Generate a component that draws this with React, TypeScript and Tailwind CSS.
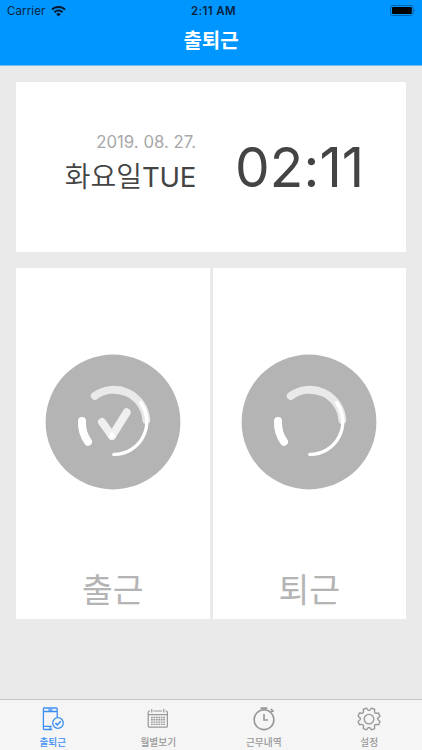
import type { ReactNode } from "react";

const Ring = ({ checked = false }: { checked?: boolean }) => (
  <svg className="mt-[86px] size-[136px]" viewBox="0 0 136 136" fill="none" stroke="#fff" strokeLinecap="round">
    <circle cx="68" cy="68" r="67.4" fill="#b4b4b4" stroke="none" />
    <path d="M49.7 42A32.5 32.5 0 0 1 101.3 66" stroke="#e9e9e9" strokeWidth="7.8" />
    <path d="M95.7 48.7A32.7 32.7 0 0 1 68.8 100.4" strokeWidth="3.3" />
    <path d="M37 67A32.5 32.5 0 0 0 43 87.7" strokeWidth="8" />
    {checked && (
      <>
        <path d="M57 68L67 82" stroke="#f0f0f0" strokeWidth="8" />
        <path d="M67 82L81.7 58.3" stroke="#f0f0f0" strokeWidth="8" />
        <path d="M67 77.2L63.6 82.5A4 4 0 0 0 70.4 82.5Z" fill="#fff" stroke="none" />
      </>
    )}
  </svg>
);

const PhoneIcon = () => (
  <svg className="size-6" viewBox="0 0 24 24" fill="none" stroke="currentColor" strokeWidth="1.3">
    <path d="M11.2 22.5H3.2a.8.8 0 0 1-.8-.8V1.8a.8.8 0 0 1 .8-.8h12.2a.8.8 0 0 1 .8.8v9M2.4 4.5h13.8M2.4 19.3h8.2M7.4 2.8h4M8.2 20.9h2.2" />
    <circle cx="17" cy="16" r="5.3" fill="#f5f5f5" />
    <path d="M14.4 16.1l1.9 1.8 3.5-3.6" strokeWidth="1.6" />
  </svg>
);

const CalendarIcon = () => (
  <svg className="size-6" viewBox="0 0 24 24" fill="none" stroke="currentColor" strokeWidth="1.2">
    <path d="M4 4H3.5A1.3 1.3 0 0 0 2.2 5.3v13.6a1.3 1.3 0 0 0 1.3 1.3h16.6a1.3 1.3 0 0 0 1.3-1.3V5.3A1.3 1.3 0 0 0 20.1 4h-.5M7.5 4h8.6M2.2 7.6h19.2M5.8 2v3.6M17.8 2v3.6" />
    <path d="M5 10.5h14M5 12.8h14M5 15.1h14M5 17.4h14" strokeWidth="1.4" strokeDasharray="1.8 .64" />
  </svg>
);

const StopwatchIcon = () => (
  <svg className="size-6" viewBox="0 0 24 24" fill="none" stroke="currentColor" strokeWidth="1.6">
    <circle cx="12" cy="12.7" r="9.9" />
    <path d="M8.6 1.1h6.7M12 1.1v2.2M12 7v6h4M18.7 2.2l2.9 2.5M20.8 2.8l-2 2.2" />
  </svg>
);

const GearIcon = () => (
  <svg className="size-6" viewBox="0 0 24 24" fill="none" stroke="currentColor" strokeWidth="1.3" strokeLinejoin="round">
    <path
      d="M9.7 1.2c.5 0 .6 2.2 2.3 2.2s1.8-2.2 2.3-2.2l2.9 1.1c.5.4-.9 2.1.2 3.3s3-.3 3.4.2l1.3 3c.1.5-2.2.8-2.2 2.4s2.3 1.9 2.2 2.5l-1.2 3c-.4.5-2.3-.9-3.5.2s.3 3-.2 3.4l-2.9 1.2c-.6.1-.7-2.2-2.3-2.2s-1.7 2.3-2.3 2.2l-2.9-1.2c-.5-.4 1-2.2-.2-3.4s-3 .3-3.4-.2L2 13.7c-.1-.6 2.2-.9 2.2-2.5S1.9 9.3 2 8.8l1.2-3c.4-.5 2.2.9 3.4-.2s-.3-2.9.2-3.3z"
      transform="translate(-1.1 -.2) scale(1.09 1.07)"
    />
    <circle cx="12" cy="12.1" r="4.8" />
  </svg>
);

const tabs: { label: string; icon: ReactNode; active?: boolean }[] = [
  { label: "출퇴근", icon: <PhoneIcon />, active: true },
  { label: "월별보기", icon: <CalendarIcon /> },
  { label: "근무내역", icon: <StopwatchIcon /> },
  { label: "설정", icon: <GearIcon /> },
];

const App = () => {
  return (
    <div className="flex h-[750px] w-[422px] flex-col overflow-hidden bg-[#eaeaea] font-['Inter','Noto_Sans_CJK_KR',sans-serif]">
      <header className="h-[66px] border-b border-[#72bdf6] bg-[#0096ff]">
        <div className="grid h-[22px] grid-cols-3 items-center pr-[6px] pl-[7px] text-[11.5px] leading-none text-[#062440]">
          <div className="flex items-center gap-[6px]">
            <span className="pt-[2px] tracking-[0.1px]">Carrier</span>
            <svg className="h-[11px] w-[15px]" viewBox="0 0 15 11" fill="none" stroke="#04192d" strokeWidth="2">
              <path d="M.9 3.6a9.4 9.4 0 0 1 13.2 0M3.4 6.2a5.8 5.8 0 0 1 8.2 0" />
              <path d="M5.2 8.1a3.2 3.2 0 0 1 4.6 0L7.5 10.4z" fill="#04192d" stroke="none" />
            </svg>
          </div>
          <span className="pt-[2px] pl-[4px] text-center font-semibold tracking-[0.4px]">2:11 AM</span>
          <svg className="mb-px h-[11px] w-[26px] justify-self-end" viewBox="0 0 26 11">
            <rect x=".5" y=".5" width="22.7" height="10" rx="2.5" fill="none" stroke="#0563ab" />
            <rect x="2" y="2" width="19.8" height="7" rx="1.2" fill="#000" />
            <path d="M24.4 3.7q1.6 1.8 0 3.6z" fill="#0563ab" />
          </svg>
        </div>
        <h1 className="text-center font-['Noto_Sans_CJK_KR',sans-serif] text-[20px] leading-[35px] font-bold text-white">출퇴근</h1>
      </header>

      <main className="flex-1 px-4 pt-4">
        <section className="flex h-[170px] w-[390px] bg-white">
          <div className="flex w-[180px] flex-col items-end pt-[49px]">
            <p className="text-[16.8px] leading-[22px] font-normal text-[#a8a8a8]">2019. 08. 27.</p>
            <p className="mt-[6px] text-[28px] leading-[36px] font-[350] whitespace-nowrap text-[#444]">
              화요일<span className="font-['Inter',sans-serif] text-[27.6px] font-normal tracking-[-0.3px]">TUE</span>
            </p>
          </div>
          <p className="ml-[39px] pt-[51px] text-[55px] leading-[68px] font-normal tracking-[0.1px] whitespace-nowrap text-[#444]">02:11</p>
        </section>

        <section className="mt-4 grid h-[351px] w-[390px] grid-cols-2 gap-[3px]">
          <button className="flex flex-col items-center bg-white">
            <Ring checked />
            <span className="mt-[75px] text-[33.5px] leading-[50px] font-normal text-[#b4b4b4]">출근</span>
          </button>
          <button className="flex flex-col items-center bg-white">
            <Ring />
            <span className="mt-[75px] text-[33.5px] leading-[50px] font-normal text-[#b4b4b4]">퇴근</span>
          </button>
        </section>
      </main>

      <nav className="grid h-[51px] grid-cols-4 border-t border-[#c4c4c4] bg-[#f5f5f5] pt-[7px]">
        {tabs.map((tab) => (
          <div key={tab.label} className={`flex flex-col items-center ${tab.active ? "text-[#3b8ff3]" : "text-[#989898]"}`}>
            {tab.icon}
            <span className="mt-[5px] text-[9.7px] leading-[14px] font-medium">{tab.label}</span>
          </div>
        ))}
      </nav>
    </div>
  );
};

export default App;
